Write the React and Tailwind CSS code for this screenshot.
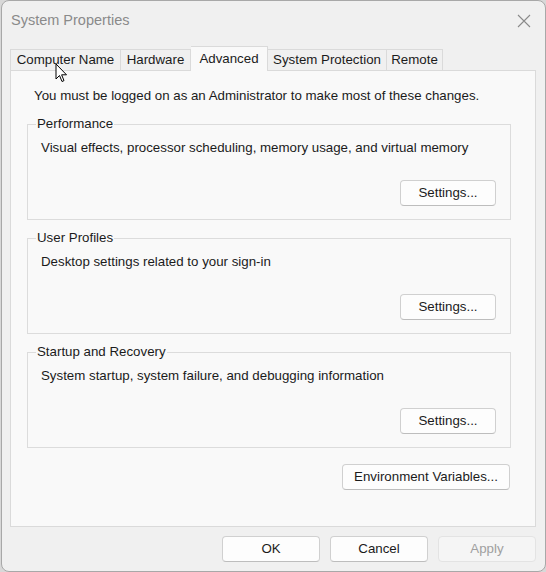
import React from "react";

const font = { fontFamily: '"Liberation Sans", Arial, sans-serif' };

function Btn({ children, className = "", disabled = false }) {
  return (
    <div
      className={
        "flex items-center justify-center rounded-[4px] border text-[13.3px] " +
        (disabled
          ? "border-[#e3e3e3] bg-[#f5f5f5] text-[#a0a0a0] "
          : "border-[#d0d0d0] border-b-[#bdbdbd] bg-[#fdfdfd] text-[#1b1b1b] ") +
        className
      }
    >
      {children}
    </div>
  );
}

function Group({ title, desc }) {
  return (
    <div className="relative h-[96px] border border-[#dcdcdc] pl-[13px] pr-[14px] pt-[15px]">
      <span className="absolute left-[8px] top-[-9px] bg-[#f9f9f9] px-[1px] text-[13.3px] leading-[16px] text-[#1b1b1b]">
        {title}
      </span>
      <div className="text-[13.3px] leading-[16px] text-[#1b1b1b]">{desc}</div>
      <div className="mt-[24px] flex justify-end">
        <Btn className="h-[26px] w-[96px]">Settings...</Btn>
      </div>
    </div>
  );
}

export default function App() {
  return (
    <div className="h-[572px] w-[546px] bg-[#d8d8d8]" style={font}>
      <div className="ml-[1px] flex h-[572px] w-[545px] flex-col rounded-[8px] border border-[#a8a8a8] bg-[#f0f0f0]">
        <div className="flex h-[39px] items-center justify-between pl-[9px] pr-[12px]">
          <span className="text-[14.5px] text-[#8a8a8a]">System Properties</span>
          <svg width="14" height="14" viewBox="0 0 14 14" className="mr-[2px]">
            <path d="M1 1 L13 13 M13 1 L1 13" stroke="#8a8a8a" strokeWidth="1.1" />
          </svg>
        </div>
        <div className="ml-[8px] mt-[6px] flex h-[24px] items-end text-[13.3px] text-[#1b1b1b]">
          <div className="flex h-[21px] w-[111px] items-center justify-center border border-b-0 border-[#dadada] bg-[#f0f0f0]">Computer Name</div>
          <div className="flex h-[21px] w-[70px] items-center justify-center border border-b-0 border-l-0 border-[#dadada] bg-[#f0f0f0]">Hardware</div>
          <div className="relative z-10 -mb-[1px] flex h-[25px] w-[77px] items-start justify-center border border-b-0 border-l-0 border-[#dadada] bg-[#f9f9f9] pt-[2px]">Advanced</div>
          <div className="flex h-[21px] w-[119px] items-center justify-center border border-b-0 border-l-0 border-[#dadada] bg-[#f0f0f0]">System Protection</div>
          <div className="flex h-[21px] w-[56px] items-center justify-center border border-b-0 border-l-0 border-[#dadada] bg-[#f0f0f0]">Remote</div>
        </div>
        <div className="ml-[8px] flex h-[457px] w-[526px] flex-col border border-[#dadada] bg-[#f9f9f9] pl-[16px] pr-[24px] pt-[17px]">
          <div className="pl-[7px] text-[13.3px] leading-[16px] text-[#1b1b1b]">
            You must be logged on as an Administrator to make most of these changes.
          </div>
          <div className="mt-[20px] flex flex-col gap-[18px]">
            <Group title="Performance" desc="Visual effects, processor scheduling, memory usage, and virtual memory" />
            <Group title="User Profiles" desc="Desktop settings related to your sign-in" />
            <Group title="Startup and Recovery" desc="System startup, system failure, and debugging information" />
          </div>
          <div className="mt-[16px] flex justify-end pr-[1px]">
            <Btn className="h-[26px] w-[168px]">Environment Variables...</Btn>
          </div>
        </div>
        <div className="mt-[9px] flex justify-end gap-[10px] pr-[9px]">
          <Btn className="h-[26px] w-[98px]">OK</Btn>
          <Btn className="h-[26px] w-[98px]">Cancel</Btn>
          <Btn disabled className="h-[26px] w-[98px]">Apply</Btn>
        </div>
      </div>
      <svg
        className="pointer-events-none absolute left-[55px] top-[63px]"
        width="14"
        height="21"
        viewBox="0 0 14 21"
      >
        <path
          d="M1 1 L1 16 L4.5 12.5 L7 18.5 L9 17.6 L6.6 11.8 L11.5 11.8 Z"
          fill="#ffffff"
          stroke="#000000"
          strokeWidth="1"
          strokeLinejoin="round"
        />
      </svg>
    </div>
  );
}
